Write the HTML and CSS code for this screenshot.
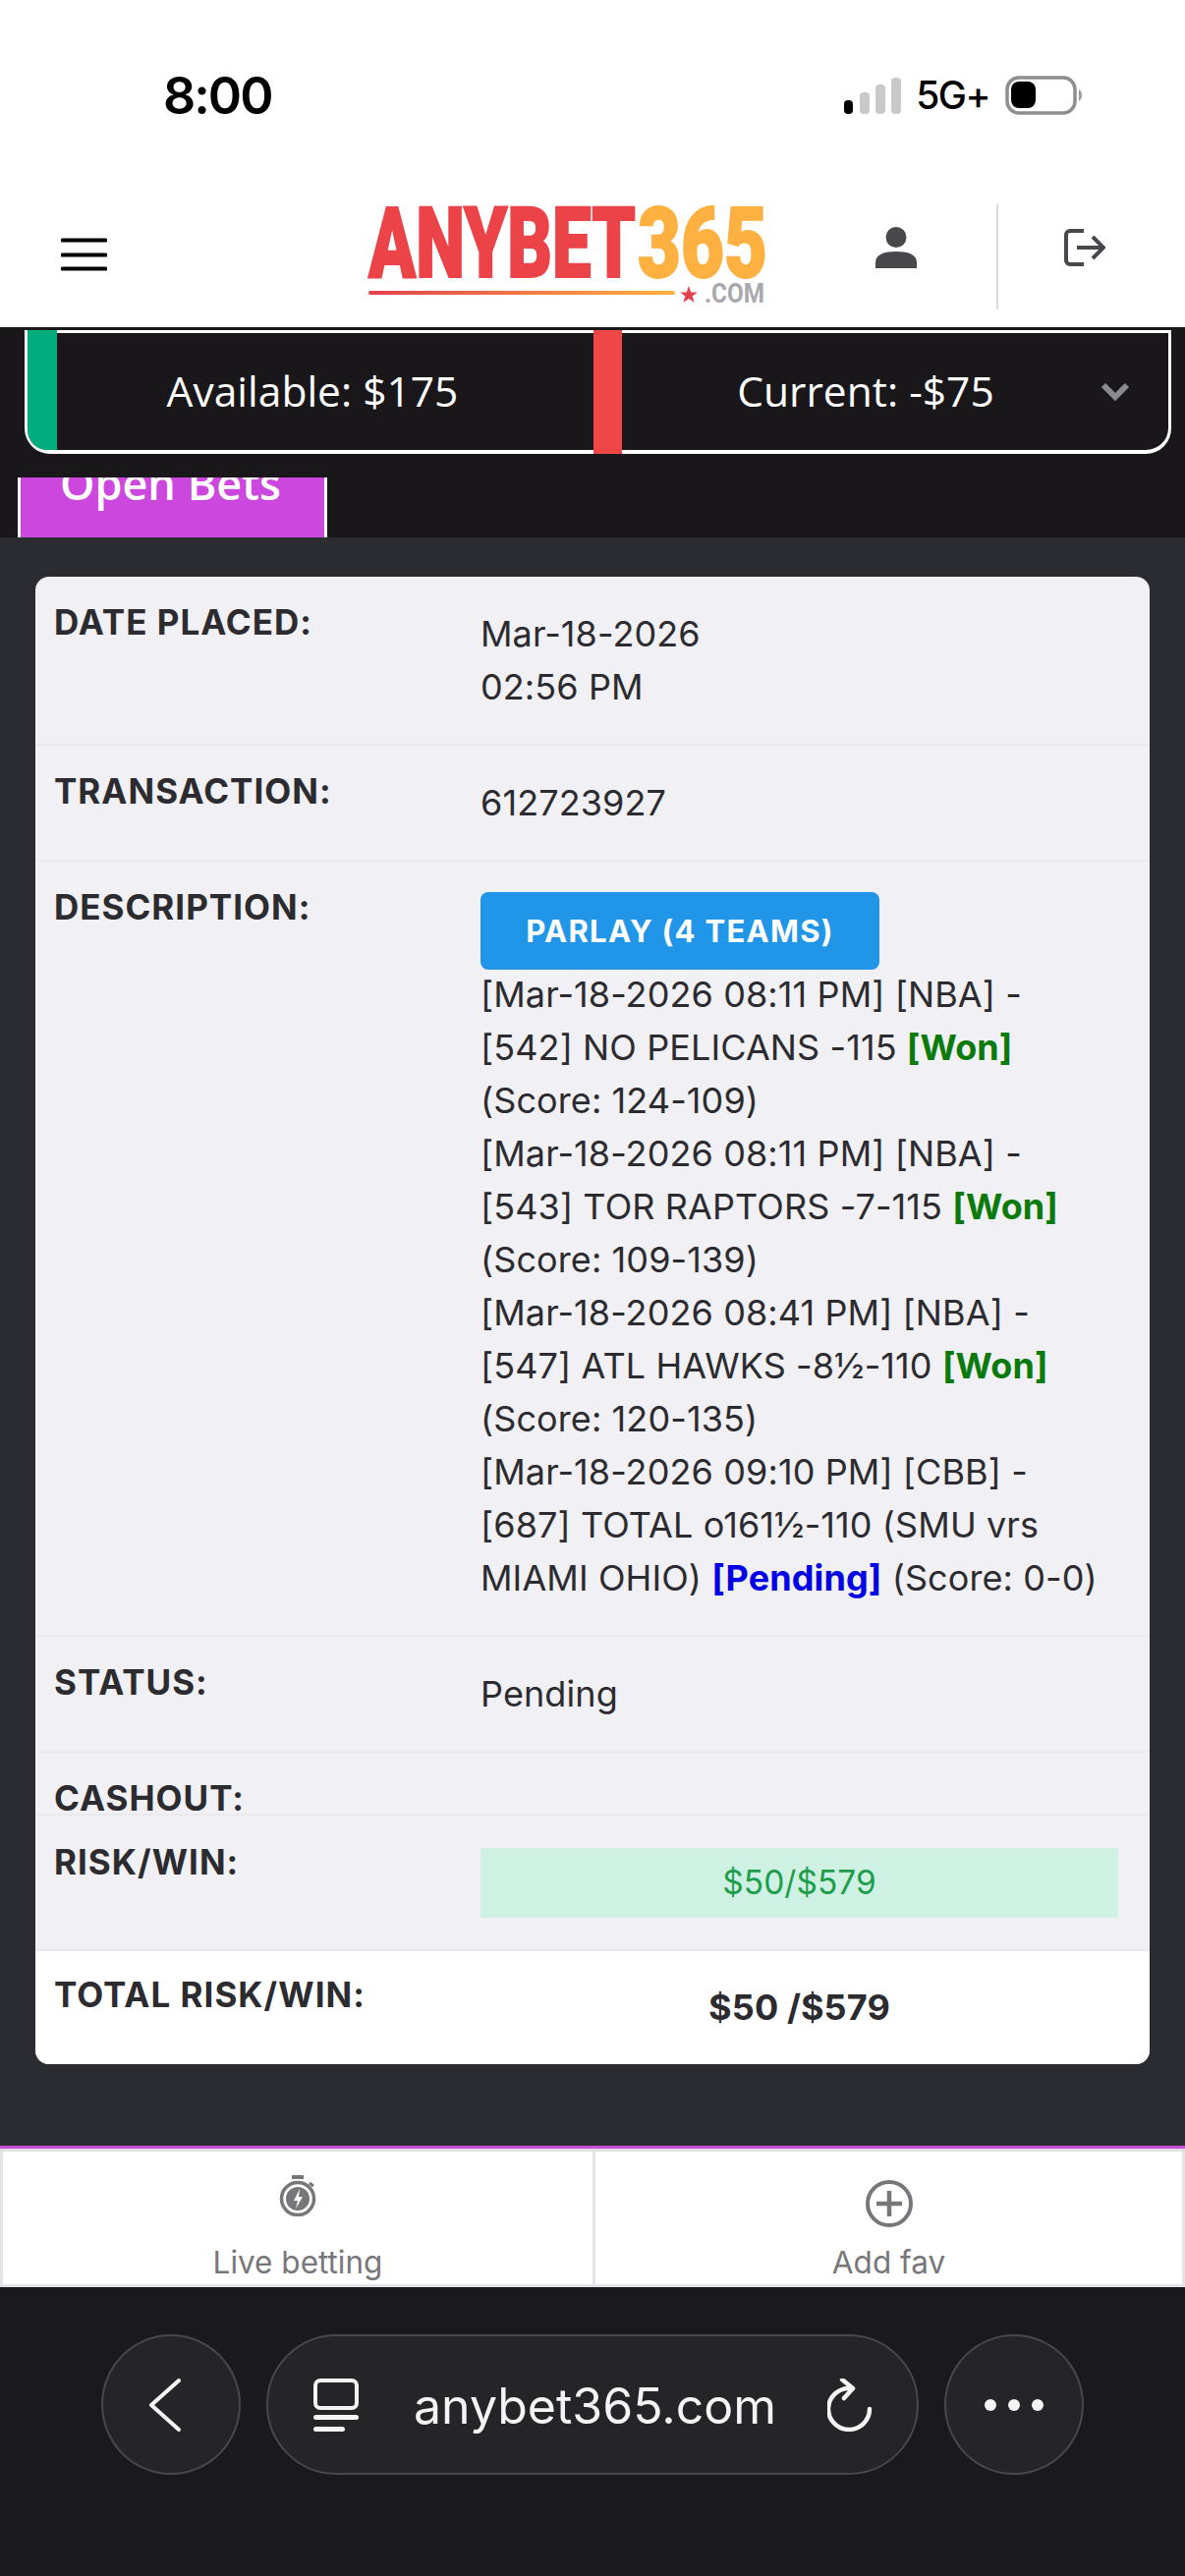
FILE: index.html
```html
<!DOCTYPE html>
<html lang="en">
<head>
<meta charset="UTF-8" />
<meta name="viewport" content="width=device-width, initial-scale=1" />
<title>Anybet365 - Open Bets</title>
<link rel="stylesheet" href="styles.css">
</head>
<body>

<!-- phone status bar -->
<div class="status-bar">
  <span class="clock">8:00</span>
  <div class="status-right">
    <svg class="signal" width="58" height="37" viewBox="0 0 58 37">
      <rect x="0" y="23" width="9" height="14" rx="4" fill="#000"/>
      <rect x="16" y="15" width="10" height="22" rx="4" fill="#c9c9cb"/>
      <rect x="32" y="7" width="10" height="30" rx="4" fill="#c9c9cb"/>
      <rect x="48" y="0" width="10" height="37" rx="4" fill="#c9c9cb"/>
    </svg>
    <span class="network">5G+</span>
    <svg class="battery" width="80" height="40" viewBox="0 0 80 40">
      <rect x="2" y="2" width="69" height="36" rx="12" fill="none" stroke="#8e8e91" stroke-width="3.5"/>
      <rect x="6" y="6" width="25" height="27" rx="8" fill="#000"/>
      <path d="M75 14 C79 16 79 24 75 26 Z" fill="#9a9a9d"/>
    </svg>
  </div>
</div>

<header class="site-header">
  <svg class="menu-icon" width="47" height="34" viewBox="0 0 47 34">
    <path d="M1.5 2.5H45.5M1.5 17.500H45.5M1.5 31.500H45.5" stroke="#000" stroke-width="4" stroke-linecap="round"/>
  </svg>
  <svg class="logo" width="411" height="110" viewBox="0 0 411 110">
    <defs>
      <linearGradient id="logo-line">
        <stop offset="0" stop-color="#e4404c"/>
        <stop offset="1" stop-color="#ffb040"/>
      </linearGradient>
    </defs>
    <text class="logo-red" x="3" y="77" textLength="272" lengthAdjust="spacingAndGlyphs">ANYBET</text>
    <text class="logo-orange" x="277" y="77" textLength="132" lengthAdjust="spacingAndGlyphs">365</text>
    <rect x="3" y="91" width="312" height="4" rx="2" fill="url(#logo-line)"/>
    <path d="M329 86l2.300 6.500h6.500l-5.200 4 2 6.500-5.600-4-5.600 4 2-6.500-5.200-4h6.500z" fill="#e4404c"/>
    <text class="logo-com" x="345" y="103" textLength="61" lengthAdjust="spacingAndGlyphs">.COM</text>
  </svg>
  <svg class="user-icon" width="42" height="42" viewBox="0 0 42 42">
    <ellipse cx="21" cy="10.500" rx="10.500" ry="10.500" fill="#48484c"/>
    <path d="M0 42V36C0 28 9 25 21 25S42 28 42 36V42Z" fill="#48484c"/>
  </svg>
  <div class="header-divider"></div>
  <svg class="logout-icon" width="42" height="38" viewBox="0 0 42 38">
    <path d="M20 2H6a4 4 0 0 0-4 4V32a4 4 0 0 0 4 4H20" fill="none" stroke="#48484c" stroke-width="4"/>
    <path d="M13 19H39M29 8L40 19L29 30" fill="none" stroke="#48484c" stroke-width="4"/>
  </svg>
</header>

<section class="top-panel">
  <div class="balance">
    <div class="bar bar-green"></div>
    <div class="balance-cell available">Available: $175</div>
    <div class="bar bar-red"></div>
    <div class="balance-cell current">Current: -$75</div>
    <svg class="chevron" width="30" height="19" viewBox="0 0 30 19">
      <path d="M3 3L15 15L27 3" fill="none" stroke="#8b8b8e" stroke-width="6"/>
    </svg>
  </div>
  <div class="tab-row">
    <div class="tab"><span class="tab-text">Open Bets</span></div>
  </div>
</section>

<main class="content">
  <div class="bet-card">
    <div class="row">
      <div class="label">DATE PLACED:</div>
      <div class="value">Mar-18-2026<br>02:56 PM</div>
    </div>
    <div class="row">
      <div class="label">TRANSACTION:</div>
      <div class="value">612723927</div>
    </div>
    <div class="row">
      <div class="label">DESCRIPTION:</div>
      <div class="value">
        <div class="bet-type">PARLAY (4 TEAMS)</div>
        <div class="leg">[Mar-18-2026 08:11 PM] [NBA] -<br>[542] NO PELICANS -115 <b class="won">[Won]</b><br>(Score: 124-109)</div>
        <div class="leg">[Mar-18-2026 08:11 PM] [NBA] -<br>[543] TOR RAPTORS -7-115 <b class="won">[Won]</b><br>(Score: 109-139)</div>
        <div class="leg">[Mar-18-2026 08:41 PM] [NBA] -<br>[547] ATL HAWKS -8½-110 <b class="won">[Won]</b><br>(Score: 120-135)</div>
        <div class="leg">[Mar-18-2026 09:10 PM] [CBB] -<br>[687] TOTAL o161½-110 (SMU vrs<br>MIAMI OHIO) <b class="pending">[Pending]</b> (Score: 0-0)</div>
      </div>
    </div>
    <div class="row">
      <div class="label">STATUS:</div>
      <div class="value">Pending</div>
    </div>
    <div class="row row-cashout">
      <div class="label">CASHOUT:</div>
      <div class="value"></div>
    </div>
    <div class="row row-risk">
      <div class="label">RISK/WIN:</div>
      <div class="risk-box">$50/$579</div>
    </div>
    <div class="row row-total">
      <div class="label">TOTAL RISK/WIN:</div>
      <div class="value total-value">$50 /$579</div>
    </div>
  </div>
</main>

<nav class="bottom-nav">
  <div class="nav-item">
    <svg class="nav-icon icon-live" width="38" height="42" viewBox="0 0 38 42">
      <rect x="13" y="0" width="12" height="4" fill="#77777b"/>
      <path d="M31 8l4 3" stroke="#77777b" stroke-width="3"/>
      <circle cx="19" cy="24" r="16.500" fill="none" stroke="#77777b" stroke-width="3.500"/>
      <circle cx="19" cy="24" r="12" fill="#77777b"/>
      <path d="M21 14l-6 12h4l-2 8 7-12h-4z" fill="#fff"/>
    </svg>
    <span>Live betting</span>
  </div>
  <div class="nav-item">
    <svg class="nav-icon icon-add" width="48" height="48" viewBox="0 0 48 48">
      <circle cx="24" cy="24" r="22" fill="none" stroke="#77777b" stroke-width="4"/>
      <path d="M24 11V37M11 24H37" stroke="#77777b" stroke-width="4.500"/>
    </svg>
    <span>Add fav</span>
  </div>
</nav>

<!-- browser toolbar -->
<div class="browser-bar">
  <div class="round-btn back-btn">
    <svg width="32" height="54" viewBox="0 0 32 54">
      <path d="M30 2L2 27L30 52" fill="none" stroke="#f4f4f4" stroke-width="4" stroke-linecap="round" stroke-linejoin="round"/>
    </svg>
  </div>
  <div class="url-pill">
    <svg class="tabs-icon" width="46" height="54" viewBox="0 0 46 54">
      <rect x="2" y="2" width="42" height="28" rx="5" fill="none" stroke="#f4f4f4" stroke-width="4"/>
      <rect x="0" y="37" width="46" height="5" rx="2.500" fill="#f4f4f4"/>
      <rect x="0" y="49" width="32" height="5" rx="2.500" fill="#f4f4f4"/>
    </svg>
    <span class="url-text">anybet365.com</span>
    <svg width="46" height="54" viewBox="0 0 46 54">
      <path d="M24 10A21 21 0 1 0 43 31" fill="none" stroke="#f4f4f4" stroke-width="4.500" stroke-linecap="round"/>
      <path d="M15 1L26 10L17 20" fill="none" stroke="#f4f4f4" stroke-width="4.500" stroke-linecap="round" stroke-linejoin="round"/>
    </svg>
  </div>
  <div class="round-btn more-btn">
    <svg width="60" height="12" viewBox="0 0 60 12">
      <circle cx="6" cy="6" r="6" fill="#f4f4f4"/>
      <circle cx="30" cy="6" r="6" fill="#f4f4f4"/>
      <circle cx="54" cy="6" r="6" fill="#f4f4f4"/>
    </svg>
  </div>
</div>

</body>
</html>
```

FILE: styles.css
```css
* {
  box-sizing: border-box;
}
html, body {
  margin: 0;
  padding: 0;
}
body {
  width: 1206px;
  height: 2622px;
  overflow: hidden;
  font-family: Inter, "Liberation Sans", sans-serif;
  background: #1a191c;
  display: flex;
  flex-direction: column;
}
/* Status bar */
.status-bar {
  height: 190px;
  background: #fff;
  display: flex;
  align-items: flex-start;
  padding: 71px 103px 0 166px;
  color: #000;
}
.clock {
  font-size: 52px;
  line-height: 54px;
  font-weight: 600;
  letter-spacing: -2px;
}
.status-right {
  margin-left: auto;
  display: flex;
  align-items: center;
  margin-top: 6px;
}
.network {
  font-size: 39px;
  line-height: 40px;
  font-weight: 500;
  margin-left: 15px;
  letter-spacing: -1.5px;
}
.battery {
  margin-left: 16px;
}
/* Header */
.site-header {
  height: 143px;
  background: #fff;
  display: flex;
  align-items: flex-start;
  padding-left: 62px;
}
.menu-icon {
  margin-top: 52px;
}
.logo {
  margin-left: 263px;
  margin-top: 15px;
  overflow: visible;
}
.logo-red, .logo-orange {
  font-family: Roboto, sans-serif;
  font-weight: 900;
  font-size: 100px;
  stroke-width: 2px;
}
.logo-red {
  fill: #ec4348;
  stroke: #ec4348;
}
.logo-orange {
  fill: #feb040;
  stroke: #feb040;
}
.logo-com {
  font-family: Roboto, sans-serif;
  font-weight: 700;
  font-size: 27px;
  fill: #a9a9ad;
}
.user-icon {
  margin-left: 108px;
  margin-top: 41px;
}
.header-divider {
  width: 2px;
  height: 107px;
  background: #dcdcde;
  margin-left: 81px;
  margin-top: 18px;
}
.logout-icon {
  margin-left: 67px;
  margin-top: 43px;
}
/* Balance and tab */
.top-panel {
  height: 214px;
  background: #1a171b;
  padding-top: 3px;
}
.balance {
  height: 126px;
  margin-left: 25px;
  width: 1167px;
  border: solid #fff;
  border-width: 3px 3px 4px 3px;
  border-radius: 0 0 26px 26px;
  display: flex;
  align-items: center;
  color: #fff;
  font-family: "Open Sans", sans-serif;
  font-size: 42.500px;
}
.bar {
  align-self: stretch;
}
.bar-green {
  width: 30px;
  margin-top: -3px;
  background: #00ab7c;
  border-bottom-left-radius: 20px;
}
.bar-red {
  width: 29px;
  margin: -3px 0 -4px;
  background: #ef4648;
}
.balance-cell {
  text-align: center;
  margin-top: -3px;
}
.available {
  width: 546px;
  padding-right: 26px;
}
.current {
  width: 474px;
  padding-left: 22px;
}
.chevron {
  margin-left: 13px;
}
.tab-row {
  height: 85px;
  padding: 24px 0 0 18px;
}
.tab {
  width: 315px;
  height: 61px;
  overflow: hidden;
  background: #cc47dd;
  border: solid #fff;
  border-width: 0 3px;
  color: #fff;
  font-family: "Open Sans", sans-serif;
  font-weight: 600;
  font-size: 45px;
  line-height: 40px;
  padding-left: 40px;
  white-space: nowrap;
}
.tab-text {
  display: block;
  margin-top: -14px;
}
/* Bet card */
.content {
  height: 1637px;
  background: #2b2c31;
  padding: 40px 36px 0;
}
.bet-card {
  background: #f1f0f4;
  border-radius: 14px;
  overflow: hidden;
}
.row {
  display: grid;
  grid-template-columns: 434px 1fr;
  padding: 31px 32px 31px 19px;
  border-bottom: 2px solid #ebeaee;
  color: #2b2b30;
}
.label {
  font-size: 35px;
  line-height: 30px;
  font-weight: 700;
  letter-spacing: 1px;
  white-space: nowrap;
}
.value {
  font-size: 36px;
  line-height: 54px;
  letter-spacing: 0.1px;
  white-space: nowrap;
}
.bet-type {
  width: 406px;
  height: 79px;
  margin-bottom: -2px;
  background: #2196e8;
  border-radius: 8px;
  color: #fff;
  font-size: 31px;
  font-weight: 700;
  letter-spacing: 1.300px;
  line-height: 79px;
  text-align: center;
}
.won {
  color: #0a7a0a;
}
.pending {
  color: #0000e6;
}
.row-cashout {
  padding-bottom: 1px;
}
.row-risk {
  padding-bottom: 32px;
  padding-top: 33px;
}
.row-risk .label {
  margin-top: -1px;
}
.risk-box {
  height: 71px;
  background: #cff1e4;
  color: #1e9e4a;
  font-size: 33.500px;
  line-height: 71px;
  text-align: center;
}
.row-total {
  background: #fff;
  border-bottom: 0;
  padding-top: 29px;
}
.total-value {
  font-weight: 700;
  text-align: center;
  margin-top: 1px;
}
/* Bottom navigation */
.bottom-nav {
  height: 144px;
  background: #fff;
  border-top: 3px solid #c94bd8;
  display: grid;
  grid-template-columns: 1fr 1fr;
  box-shadow: inset 0 3px 0 #dfdfe3;
  padding-top: 3px;
}
.nav-item {
  border: solid #e4e4e8;
  border-width: 0 0 3px 3px;
  text-align: center;
  color: #77777b;
  font-size: 31.500px;
  line-height: 36px;
  display: flex;
  flex-direction: column;
  align-items: center;
}
.nav-item:last-child {
  border-right-width: 3px;
}
.icon-live {
  margin-top: 24px;
  margin-bottom: 29px;
}
.icon-add {
  margin-top: 29px;
  margin-bottom: 18px;
}
/* Browser toolbar */
.browser-bar {
  flex: 1;
  background: #1a191c;
  display: flex;
  align-items: flex-start;
  gap: 26px;
  padding: 48px 0 0 103px;
}
.round-btn {
  width: 142px;
  height: 143px;
  border-radius: 50%;
  background: #252528;
  border: 2px solid #48484b;
  display: flex;
  align-items: center;
  justify-content: center;
}
.back-btn svg {
  margin-right: 12px;
}
.url-pill {
  width: 664px;
  height: 143px;
  border-radius: 72px;
  background: #252528;
  border: 2px solid #48484b;
  display: flex;
  align-items: center;
  padding-left: 46px;
  color: #f4f4f4;
}
.url-text {
  font-size: 50px;
  width: 477px;
  padding-left: 56px;
  padding-top: 3px;
  white-space: nowrap;
}
```
